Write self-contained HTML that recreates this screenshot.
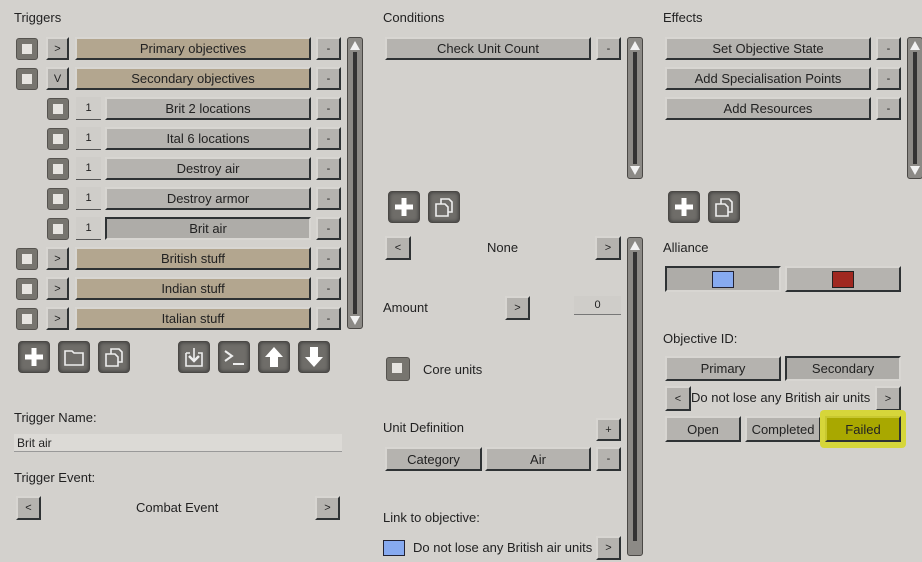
<!DOCTYPE html>
<html><head><meta charset="utf-8"><style>
*{box-sizing:border-box;margin:0;padding:0}
body{width:922px;height:562px;background:#d3d1cd;font-family:"Liberation Sans",sans-serif;font-size:13px;color:#222;position:relative;overflow:hidden}
.a{position:absolute}
.b{position:absolute;background:#b5b3af;border:2px solid;border-color:#d8d6d2 #2e3234 #2e3234 #d8d6d2;display:flex;align-items:center;justify-content:center;color:#222;font-size:13px;white-space:nowrap}
.t{background:#b3a68f}
.p{border-color:#2e3234 #d8d6d2 #d8d6d2 #2e3234;background:#aeaca8}
.s{font-size:11px}
.cb{position:absolute;width:22px;height:22px;background:#77756f;border:1px solid #55534f;border-radius:3px}
.cb:after{content:"";position:absolute;left:5px;top:5px;width:10px;height:10px;background:#e6e4e0}
.n{position:absolute;background:#cfcdc9;border-bottom:1px solid #555;display:flex;align-items:center;justify-content:center;font-size:11px}
.sc{position:absolute;width:16px;background:#8c8a86;border:1px solid #4a4845;border-radius:3px}
.sc:before{content:"";position:absolute;left:5px;top:14px;bottom:14px;width:4px;background:#333}
.sc .u,.sc .d{position:absolute;left:2px;width:0;height:0;border-left:5px solid transparent;border-right:5px solid transparent}
.sc .u{top:3px;border-bottom:9px solid #f2f2f2}
.sc .d{bottom:3px;border-top:9px solid #f2f2f2}
.ic{position:absolute;width:32px;height:32px;background:#6f6d69;border:1px solid #4a4845;border-radius:4px;box-shadow:inset 0 0 4px #333}
.ic svg{position:absolute;left:3px;top:3px}
.l{position:absolute;font-size:13px}
</style></head><body>
<div class="l" style="left:14px;top:10px">Triggers</div>
<div class="l" style="left:383px;top:10px">Conditions</div>
<div class="l" style="left:663px;top:10px">Effects</div>

<!-- triggers rows -->
<div class="cb" style="left:16px;top:38px"></div><div class="b s" style="left:46px;top:37px;width:23px;height:23px">&gt;</div><div class="b t" style="left:75px;top:37px;width:236px;height:23px">Primary objectives</div><div class="b s" style="left:316px;top:37px;width:25px;height:23px">-</div>
<div class="cb" style="left:16px;top:68px"></div><div class="b s" style="left:46px;top:67px;width:23px;height:23px">V</div><div class="b t" style="left:75px;top:67px;width:236px;height:23px">Secondary objectives</div><div class="b s" style="left:316px;top:67px;width:25px;height:23px">-</div>

<div class="cb" style="left:47px;top:98px"></div><div class="n" style="left:76px;top:97px;width:25px;height:23px">1</div><div class="b" style="left:105px;top:97px;width:206px;height:23px">Brit 2 locations</div><div class="b s" style="left:316px;top:97px;width:25px;height:23px">-</div>
<div class="cb" style="left:47px;top:128px"></div><div class="n" style="left:76px;top:127px;width:25px;height:23px">1</div><div class="b" style="left:105px;top:127px;width:206px;height:23px">Ital 6 locations</div><div class="b s" style="left:316px;top:127px;width:25px;height:23px">-</div>
<div class="cb" style="left:47px;top:158px"></div><div class="n" style="left:76px;top:157px;width:25px;height:23px">1</div><div class="b" style="left:105px;top:157px;width:206px;height:23px">Destroy air</div><div class="b s" style="left:316px;top:157px;width:25px;height:23px">-</div>
<div class="cb" style="left:47px;top:188px"></div><div class="n" style="left:76px;top:187px;width:25px;height:23px">1</div><div class="b" style="left:105px;top:187px;width:206px;height:23px">Destroy armor</div><div class="b s" style="left:316px;top:187px;width:25px;height:23px">-</div>
<div class="cb" style="left:47px;top:218px"></div><div class="n" style="left:76px;top:217px;width:25px;height:23px">1</div><div class="b p" style="left:105px;top:217px;width:206px;height:23px">Brit air</div><div class="b s" style="left:316px;top:217px;width:25px;height:23px">-</div>

<div class="cb" style="left:16px;top:248px"></div><div class="b s" style="left:46px;top:247px;width:23px;height:23px">&gt;</div><div class="b t" style="left:75px;top:247px;width:236px;height:23px">British stuff</div><div class="b s" style="left:316px;top:247px;width:25px;height:23px">-</div>
<div class="cb" style="left:16px;top:278px"></div><div class="b s" style="left:46px;top:277px;width:23px;height:23px">&gt;</div><div class="b t" style="left:75px;top:277px;width:236px;height:23px">Indian stuff</div><div class="b s" style="left:316px;top:277px;width:25px;height:23px">-</div>
<div class="cb" style="left:16px;top:308px"></div><div class="b s" style="left:46px;top:307px;width:23px;height:23px">&gt;</div><div class="b t" style="left:75px;top:307px;width:236px;height:23px">Italian stuff</div><div class="b s" style="left:316px;top:307px;width:25px;height:23px">-</div>
<div class="sc" style="left:347px;top:37px;height:292px"><i class="u"></i><i class="d"></i></div>

<!-- icons -->
<div class="ic" style="left:18px;top:341px"><svg width="24" height="24"><path d="M12 3v18M3 12h18" stroke="#fff" stroke-width="5"/></svg></div>
<div class="ic" style="left:58px;top:341px"><svg width="24" height="24" fill="none" stroke="#eee" stroke-width="1.6"><path d="M3 6h7l2 2h9v12H3z"/></svg></div>
<div class="ic" style="left:98px;top:341px"><svg width="24" height="24" fill="none" stroke="#eee" stroke-width="1.6"><path d="M4 9h9l3 3v9H4zM9 9V4h8l3 3v10h-4"/></svg></div>
<div class="ic" style="left:178px;top:341px"><svg width="24" height="24" fill="none" stroke="#eee" stroke-width="1.6"><path d="M4 8h4M16 8h4v13H4V8M12 3v12"/><path d="M7 11l5 5 5-5" stroke-width="2.5"/></svg></div>
<div class="ic" style="left:218px;top:341px"><svg width="24" height="24" fill="none" stroke="#eee" stroke-width="2"><path d="M3 6l7 5-7 5M11 19h11"/></svg></div>
<div class="ic" style="left:258px;top:341px"><svg width="24" height="24"><path d="M12 2l9 10h-5v10H8V12H3z" fill="#fff"/></svg></div>
<div class="ic" style="left:298px;top:341px"><svg width="24" height="24"><path d="M12 22l9-10h-5V2H8v10H3z" fill="#fff"/></svg></div>

<div class="l" style="left:14px;top:410px">Trigger Name:</div>
<div class="a" style="left:14px;top:434px;width:328px;height:18px;background:#dcdad6;border-bottom:1px solid #999;font-size:12px;padding:2px 3px">Brit air</div>
<div class="l" style="left:14px;top:470px">Trigger Event:</div>
<div class="b s" style="left:16px;top:496px;width:25px;height:24px">&lt;</div>
<div class="l" style="left:136px;top:500px">Combat Event</div>
<div class="b s" style="left:315px;top:496px;width:25px;height:24px">&gt;</div>

<!-- conditions -->
<div class="b" style="left:385px;top:37px;width:206px;height:23px">Check Unit Count</div><div class="b s" style="left:596px;top:37px;width:25px;height:23px">-</div>
<div class="sc" style="left:627px;top:37px;height:142px"><i class="u"></i><i class="d"></i></div>
<div class="ic" style="left:388px;top:191px"><svg width="24" height="24"><path d="M12 3v18M3 12h18" stroke="#fff" stroke-width="5"/></svg></div>
<div class="ic" style="left:428px;top:191px"><svg width="24" height="24" fill="none" stroke="#eee" stroke-width="1.6"><path d="M4 9h9l3 3v9H4zM9 9V4h8l3 3v10h-4"/></svg></div>
<div class="b s" style="left:385px;top:236px;width:26px;height:24px">&lt;</div>
<div class="l" style="left:487px;top:240px">None</div>
<div class="b s" style="left:595px;top:236px;width:26px;height:24px">&gt;</div>
<div class="sc" style="left:627px;top:237px;height:319px"><i class="u"></i></div>
<div class="l" style="left:383px;top:300px">Amount</div>
<div class="b s" style="left:505px;top:296px;width:25px;height:24px">&gt;</div>
<div class="n" style="left:574px;top:296px;width:47px;height:19px;border-bottom-color:#777">0</div>
<div class="cb" style="left:386px;top:357px;width:24px;height:24px"></div>
<div class="l" style="left:423px;top:362px">Core units</div>
<div class="l" style="left:383px;top:420px">Unit Definition</div>
<div class="b s" style="left:596px;top:418px;width:25px;height:23px">+</div>
<div class="b" style="left:385px;top:447px;width:97px;height:24px">Category</div>
<div class="b" style="left:485px;top:447px;width:106px;height:24px">Air</div>
<div class="b s" style="left:596px;top:447px;width:25px;height:24px">-</div>
<div class="l" style="left:383px;top:510px">Link to objective:</div>
<div class="a" style="left:383px;top:540px;width:22px;height:16px;background:#87aaf0;border:1px solid #223"></div>
<div class="l" style="left:413px;top:540px">Do not lose any British air units</div>
<div class="b s" style="left:596px;top:536px;width:25px;height:24px">&gt;</div>

<!-- effects -->
<div class="b" style="left:665px;top:37px;width:206px;height:23px">Set Objective State</div><div class="b s" style="left:876px;top:37px;width:25px;height:23px">-</div>
<div class="b" style="left:665px;top:67px;width:206px;height:23px">Add Specialisation Points</div><div class="b s" style="left:876px;top:67px;width:25px;height:23px">-</div>
<div class="b" style="left:665px;top:97px;width:206px;height:23px">Add Resources</div><div class="b s" style="left:876px;top:97px;width:25px;height:23px">-</div>
<div class="sc" style="left:907px;top:37px;height:142px"><i class="u"></i><i class="d"></i></div>
<div class="ic" style="left:668px;top:191px"><svg width="24" height="24"><path d="M12 3v18M3 12h18" stroke="#fff" stroke-width="5"/></svg></div>
<div class="ic" style="left:708px;top:191px"><svg width="24" height="24" fill="none" stroke="#eee" stroke-width="1.6"><path d="M4 9h9l3 3v9H4zM9 9V4h8l3 3v10h-4"/></svg></div>
<div class="l" style="left:663px;top:240px">Alliance</div>
<div class="b p" style="left:665px;top:266px;width:116px;height:26px"><span style="width:22px;height:17px;background:#87aaf0;border:1px solid #223"></span></div>
<div class="b" style="left:785px;top:266px;width:116px;height:26px"><span style="width:22px;height:17px;background:#a02820;border:1px solid #222"></span></div>
<div class="l" style="left:663px;top:331px">Objective ID:</div>
<div class="b" style="left:665px;top:356px;width:116px;height:25px">Primary</div>
<div class="b p" style="left:785px;top:356px;width:116px;height:25px">Secondary</div>
<div class="b s" style="left:665px;top:386px;width:26px;height:25px">&lt;</div>
<div class="l" style="left:691px;top:390px;white-space:nowrap">Do not lose any British air units</div>
<div class="b s" style="left:875px;top:386px;width:26px;height:25px">&gt;</div>
<div class="b" style="left:665px;top:416px;width:76px;height:26px">Open</div>
<div class="b" style="left:745px;top:416px;width:76px;height:26px">Completed</div>
<div class="a" style="left:820px;top:410px;width:86px;height:38px;background:#d6d63a;border-radius:4px"></div>
<div class="b" style="left:825px;top:416px;width:76px;height:26px;background:#a9a800;border-color:#c8c830 #2e3234 #2e3234 #c8c830">Failed</div>
</body></html>
